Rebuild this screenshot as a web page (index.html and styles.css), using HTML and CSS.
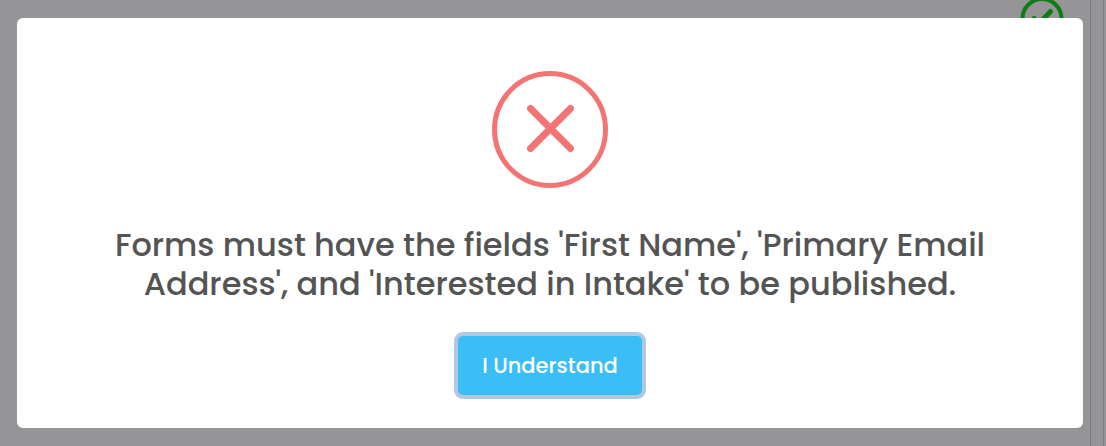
FILE: index.html
```html
<!DOCTYPE html>
<html lang="en">
<head>
    <meta charset="UTF-8">
    <meta name="viewport" content="width=device-width, initial-scale=1.0">
    <title>Forms</title>
    <link rel="stylesheet" href="styles.css">
</head>
<body>
    <div class="page">
        <div class="status-cell">
            <svg class="status-icon" viewBox="0 0 44 44" aria-hidden="true">
                <circle cx="22" cy="22.5" r="19.5"/>
                <path class="tick" d="M14 22.5l5 5 11.5-12"/>
            </svg>
        </div>
        <div class="gutter"></div>
    </div>

    <div class="overlay">
        <div class="modal" role="alertdialog" aria-modal="true" aria-labelledby="modalTitle">
            <svg class="error-icon" viewBox="0 0 116 117" aria-hidden="true">
                <ellipse cx="58" cy="58.5" rx="55.5" ry="56"/>
                <path class="cross" d="M38.5 37.5l40 40M78.5 37.5l-40 40"/>
            </svg>
            <h2 class="modal-title" id="modalTitle">Forms must have the fields 'First Name', 'Primary Email Address', and 'Interested in Intake' to be published.</h2>
            <button type="button" class="confirm-button">I Understand</button>
        </div>
    </div>
</body>
</html>
```
FILE: styles.css
```css
* {
    box-sizing: border-box;
}

body {
    margin: 0;
    font-family: Poppins, Inter, sans-serif;
    background-color: #959597;
}

/* page behind the dialog */
.page {
    display: flex;
    height: 100vh;
    padding-right: 2px;
    overflow: hidden;
}

.status-cell {
    flex: 1;
    padding-right: 26px;
    border-right: 1px solid #7c7c7e;
    text-align: right;
}

.gutter {
    width: 13px;
    border-right: 1px solid #7c7c7e;
}

.status-icon {
    width: 44px;
    height: 44px;
    margin-top: -4px;
    fill: none;
    stroke: #0f7d12;
    stroke-width: 4;
    stroke-linecap: round;
    stroke-linejoin: round;
}

.status-icon .tick {
    stroke-width: 5;
}

/* dialog */
.overlay {
    position: fixed;
    inset: 0;
    padding: 18px 23px 18px 17px;
}

.modal {
    display: flex;
    flex-direction: column;
    align-items: center;
    padding: 53px 80px 33px;
    background-color: #fff;
    border-radius: 6px;
}

.error-icon {
    width: 116px;
    height: 117px;
    fill: none;
    stroke: #f47474;
    stroke-width: 5;
}

.error-icon .cross {
    stroke-width: 7;
    stroke-linecap: round;
}

.modal-title {
    margin: 37px 0 33px;
    color: #545454;
    font-size: 32px;
    font-weight: 500;
    line-height: 39px;
    text-align: center;
}

.confirm-button {
    padding: 16px 24px;
    border: none;
    border-radius: 5px;
    background-color: #3bbdf5;
    box-shadow: 0 0 0 4px #b1c8e3;
    color: #fff;
    font-family: inherit;
    font-size: 21px;
    font-weight: 500;
    line-height: 27px;
    cursor: pointer;
}
```
